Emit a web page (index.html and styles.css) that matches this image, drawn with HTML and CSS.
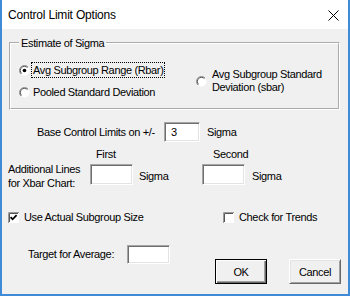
FILE: index.html
```html
<!DOCTYPE html>
<html>
<head>
<meta charset="utf-8">
<link rel="stylesheet" href="styles.css">
</head>
<body>
<div class="window">
  <div class="titlebar">
    <span class="title">Control Limit Options</span>
    <svg class="close" width="11" height="11" viewBox="0 0 11 11"><path d="M0.5 0.5 L10.5 10.5 M10.5 0.5 L0.5 10.5" stroke="#000" stroke-width="1" fill="none"/></svg>
  </div>
  <div class="main">
    <fieldset class="group">
      <legend>Estimate of Sigma</legend>
      <div class="sigma-grid">
        <div class="opt row1">
          <svg class="radio" width="11" height="11" viewBox="0 0 12 12"><circle cx="6" cy="6" r="5.5" fill="#fff"/><path d="M2.1 9.9 A5.5 5.5 0 0 1 9.9 2.1" stroke="#8a8a8a" fill="none"/><path d="M2.8 9.2 A4.5 4.5 0 0 1 9.2 2.8" stroke="#454545" fill="none"/><circle cx="6" cy="6" r="2" fill="#000"/></svg>
          <span class="focus">Avg Subgroup Range (Rbar)</span>
        </div>
        <div class="opt row2">
          <svg class="radio" width="11" height="11" viewBox="0 0 12 12"><circle cx="6" cy="6" r="5.5" fill="#fff"/><path d="M2.1 9.9 A5.5 5.5 0 0 1 9.9 2.1" stroke="#8a8a8a" fill="none"/><path d="M2.8 9.2 A4.5 4.5 0 0 1 9.2 2.8" stroke="#454545" fill="none"/></svg>
          <span>Pooled Standard Deviation</span>
        </div>
        <div class="opt right">
          <svg class="radio" width="11" height="11" viewBox="0 0 12 12"><circle cx="6" cy="6" r="5.5" fill="#fff"/><path d="M2.1 9.9 A5.5 5.5 0 0 1 9.9 2.1" stroke="#8a8a8a" fill="none"/><path d="M2.8 9.2 A4.5 4.5 0 0 1 9.2 2.8" stroke="#454545" fill="none"/></svg>
          <span class="two-line">Avg Subgroup Standard<br>Deviation (sbar)</span>
        </div>
      </div>
    </fieldset>

    <div class="row row-base">
      <span class="lbl-base">Base Control Limits on +/-</span>
      <input class="field f-base" type="text" value="3">
      <span class="sigma">Sigma</span>
    </div>

    <div class="row row-heads">
      <span class="h-first">First</span>
      <span class="h-second">Second</span>
    </div>

    <div class="row row-lines">
      <span class="lbl-lines">Additional Lines<br>for Xbar Chart:</span>
      <input class="field f-line" type="text" value="">
      <span class="sigma s-first">Sigma</span>
      <input class="field f-line" type="text" value="">
      <span class="sigma s-second">Sigma</span>
    </div>

    <div class="row row-checks">
      <div class="check c-first">
        <svg class="box" width="11" height="11" viewBox="0 0 11 11"><rect x="0" y="0" width="11" height="11" fill="#fff"/><path d="M0.5 11 V0.5 H11" stroke="#9a9a9a" fill="none"/><path d="M1.5 10 V1.5 H10" stroke="#555" fill="none"/><path d="M2.6 5.2 L4.6 7.3 L8.6 3.2" stroke="#000" stroke-width="1.8" fill="none"/></svg>
        <span>Use Actual Subgroup Size</span>
      </div>
      <div class="check">
        <svg class="box" width="11" height="11" viewBox="0 0 11 11"><rect x="0" y="0" width="11" height="11" fill="#fff"/><path d="M0.5 11 V0.5 H11" stroke="#9a9a9a" fill="none"/><path d="M1.5 10 V1.5 H10" stroke="#555" fill="none"/></svg>
        <span>Check for Trends</span>
      </div>
    </div>

    <div class="row row-bottom">
      <span class="lbl-target">Target for Average:</span>
      <input class="field f-target" type="text" value="">
      <button class="btn btn-ok">OK</button>
      <button class="btn btn-cancel">Cancel</button>
    </div>
  </div>
</div>
</body>
</html>
```

FILE: styles.css
```css
html, body {
  margin: 0;
  padding: 0;
  background: #f0f0f0;
}

.window {
  width: 350px;
  height: 296px;
  box-sizing: border-box;
  border: 2px solid #3f8bd8;
  border-top: none;
  display: flex;
  flex-direction: column;
  overflow: hidden;
  font-family: "Liberation Sans", Arial, sans-serif;
  font-size: 11px;
  letter-spacing: -0.35px;
  color: #000;
}

.titlebar {
  height: 29px;
  flex: 0 0 29px;
  background: #fff;
  display: flex;
  align-items: center;
  padding: 0 9px 0 6px;
}

.title {
  flex: 1;
  font-size: 12px;
  letter-spacing: -0.2px;
  margin-top: 1px;
}

.close {
  display: block;
  margin-top: 2px;
}

.main {
  flex: 1;
  background: #f0f0f0;
  display: flex;
  flex-direction: column;
}

.group {
  margin: 7px 0 0 7px;
  width: 331px;
  height: 74px;
  box-sizing: border-box;
  padding: 0;
  border: 2px groove #fff;
  min-width: 0;
}

.group legend {
  margin-left: 8px;
  padding: 0 2px;
  line-height: 14px;
}

.sigma-grid {
  display: grid;
  grid-template-columns: 177px auto;
  grid-template-rows: 22px 22px;
  padding: 9px 0 0 8px;
}

.opt {
  display: flex;
  align-items: center;
}

.row1 { grid-column: 1; grid-row: 1; }
.row2 { grid-column: 1; grid-row: 2; }
.right {
  grid-column: 2;
  grid-row: 1 / span 2;
  align-self: center;
}

.radio {
  display: block;
  flex: 0 0 11px;
  margin-right: 3px;
}

.right .radio {
  margin-right: 5px;
}

.focus {
  outline: 1px dotted #000;
  outline-offset: 0;
  padding: 0 1px 0 1px;
  margin-left: -1px;
  line-height: 14px;
}

.two-line {
  line-height: 13px;
}

.row {
  display: flex;
  align-items: center;
}

.row-base {
  margin-top: 12px;
  height: 20px;
}

.lbl-base {
  margin-left: 35px;
  width: 127px;
}

.field {
  box-sizing: border-box;
  margin: 0;
  background: #fff;
  border: 1px solid;
  border-color: #a6a6a6 #ffffff #ffffff #a6a6a6;
  box-shadow: inset 1px 1px 0 #6e6e6e, inset -1px -1px 0 #e3e3e3;
  font-family: "Liberation Sans", Arial, sans-serif;
  font-size: 11px;
  color: #000;
  outline: none;
}

.f-base {
  width: 36px;
  height: 20px;
  padding: 0 0 0 6px;
}

.sigma {
  margin-left: 7px;
}

.row-heads {
  margin-top: 5px;
  height: 14px;
}

.h-first {
  margin-left: 94px;
  width: 117px;
}

.row-lines {
  margin-top: 3px;
  height: 21px;
  align-items: flex-start;
}

.lbl-lines {
  margin-left: 6px;
  margin-top: -2px;
  width: 82px;
  line-height: 14px;
}

.f-line {
  width: 43px;
  height: 21px;
  padding: 0;
}

.row-lines .sigma {
  line-height: 14px;
  margin-top: 5px;
}

.s-first {
  margin-left: 6px;
  width: 63px;
}

.s-second {
  margin-left: 7px;
}

.row-checks {
  margin-top: 25px;
  height: 14px;
}

.check {
  display: flex;
  align-items: center;
}

.c-first {
  margin-left: 6px;
  width: 215px;
}

.box {
  display: block;
  margin-right: 5px;
}

.row-bottom {
  margin-top: 21px;
  align-items: flex-start;
}

.lbl-target {
  margin-left: 26px;
  width: 99px;
  line-height: 19px;
}

.f-target {
  width: 43px;
  height: 19px;
  padding: 0;
}

.btn {
  box-sizing: border-box;
  width: 52px;
  height: 25px;
  margin-top: 14px;
  padding: 0;
  background: #f0f0f0;
  font-family: "Liberation Sans", Arial, sans-serif;
  font-size: 11px;
  letter-spacing: -0.35px;
  color: #000;
}

.btn-ok {
  margin-left: 45px;
  border: 1px solid #000;
  box-shadow: inset 1px 1px 0 #fff, inset -1px -1px 0 #696969, inset -2px -2px 0 #a0a0a0;
}

.btn-cancel {
  margin-left: 22px;
  border: 1px solid;
  border-color: #fff #696969 #696969 #fff;
  box-shadow: inset 1px 1px 0 #e3e3e3, inset -1px -1px 0 #a0a0a0;
}
```
